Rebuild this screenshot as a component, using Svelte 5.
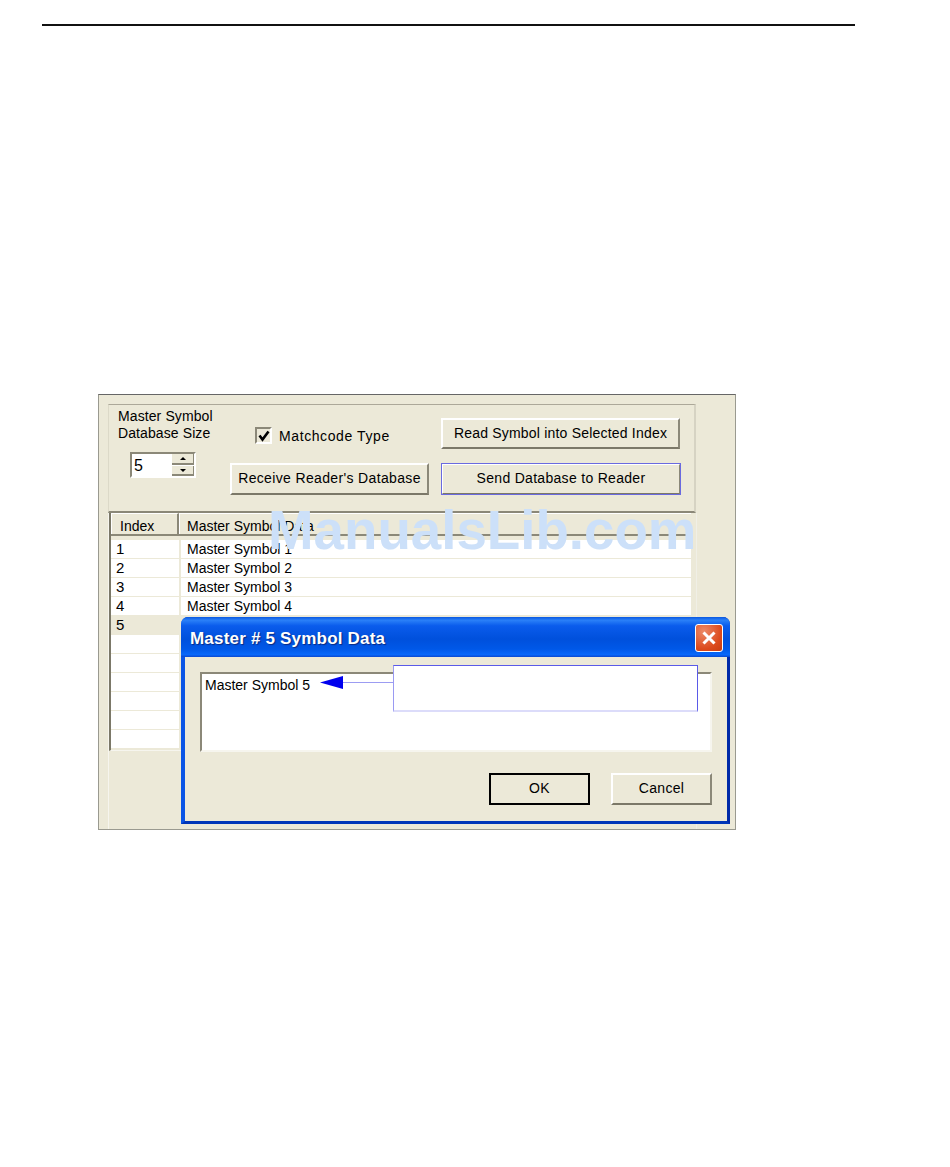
<script>
	const rows = [
		{ index: 1, data: 'Master Symbol 1' },
		{ index: 2, data: 'Master Symbol 2' },
		{ index: 3, data: 'Master Symbol 3' },
		{ index: 4, data: 'Master Symbol 4' },
		{ index: 5, data: '', selected: true },
		{ index: '', data: '' },
		{ index: '', data: '' },
		{ index: '', data: '' },
		{ index: '', data: '' },
		{ index: '', data: '' },
		{ index: '', data: '' }
	];
</script>

<div class="page">
	<div class="rule"></div>

	<div class="window">
		<div class="panel">
			<div class="size-col">
				<div class="size-label">Master Symbol<br />Database Size</div>
				<div class="spinner">
					<span class="spin-value">5</span>
					<div class="spin-btns">
						<span class="spin-btn up"></span>
						<span class="spin-btn down"></span>
					</div>
				</div>
			</div>
			<div class="mid-col">
				<div class="check-row">
					<span class="checkbox">
						<svg width="12" height="12" viewBox="0 0 12 12">
							<path d="M1.5 5.5 L4.5 9.5 L10.5 1.5" fill="none" stroke="#000" stroke-width="2.6" />
						</svg>
					</span>
					<span class="check-label">Matchcode Type</span>
				</div>
				<button class="btn receive">Receive Reader's Database</button>
			</div>
			<div class="right-col">
				<button class="btn read">Read Symbol into Selected Index</button>
				<button class="btn send">Send Database to Reader</button>
			</div>
		</div>

		<div class="lower">
			<div class="grid">
				<div class="grid-head">
					<div class="head-cell index">Index</div>
					<div class="head-cell data">Master Symbol Data</div>
				</div>
				{#each rows as row}
					<div class="grid-row" class:selected={row.selected}>
						<div class="cell index">{row.index}</div>
						<div class="cell data">{row.data}</div>
					</div>
				{/each}
			</div>
		</div>

		<div class="dialog">
			<div class="titlebar">
				<span class="title">Master # 5 Symbol Data</span>
				<span class="close">
					<svg width="16" height="16" viewBox="0 0 16 16">
						<path d="M2.5 2.5 L13.5 13.5 M13.5 2.5 L2.5 13.5" stroke="#fff" stroke-width="3" fill="none" />
					</svg>
				</span>
			</div>
			<div class="dialog-body">
				<div class="textbox">Master Symbol 5</div>
				<div class="dialog-actions">
					<button class="btn ok">OK</button>
					<button class="btn cancel">Cancel</button>
				</div>
			</div>
			<div class="callout"></div>
			<svg class="arrow" width="74" height="14" viewBox="0 0 74 14">
				<path d="M23 6.5 H73" stroke="#9c9cf2" stroke-width="1" fill="none" />
				<path d="M0 6.5 L23 0 V13 Z" fill="#0000ee" />
			</svg>
		</div>

		<div class="watermark">ManualsLib.com</div>
	</div>
</div>

<style>
	:global(body) {
		margin: 0;
		background: #fff;
	}

	.page {
		height: 1167px;
		padding-top: 24px;
		box-sizing: border-box;
		font-family: 'Liberation Sans', Arial, sans-serif;
		font-size: 14px;
		color: #000;
	}

	.rule {
		height: 2px;
		width: 813px;
		margin-left: 42px;
		background: #111;
	}

	.window {
		position: relative;
		box-sizing: border-box;
		width: 638px;
		height: 436px;
		margin: 368px 0 0 98px;
		padding: 9px 39px 0 9px;
		display: flex;
		flex-direction: column;
		background: #ece9d8;
		border: 1px solid #9a9a90;
		border-top-color: #666;
	}

	.panel {
		box-sizing: border-box;
		height: 109px;
		display: flex;
		padding: 4px 0 0 9px;
		border: 1px solid #f6f5ee;
		border-top-color: #aca899;
		border-left-color: #dcd9c8;
		border-bottom: 2px solid #8b8878;
		border-right: 2px solid #d6d3c3;
	}

	.size-col {
		width: 112px;
	}

	.size-label {
		margin-top: -1px;
		line-height: 17px;
		letter-spacing: 0.1px;
	}

	.spinner {
		box-sizing: border-box;
		display: flex;
		justify-content: space-between;
		width: 66px;
		height: 26px;
		margin: 10px 0 0 12px;
		padding-left: 2px;
		background: #fff;
		border: 2px solid #fff;
		border-top-color: #8b8878;
		border-left-color: #8b8878;
		font-size: 16px;
		line-height: 24px;
	}

	.spin-btns {
		width: 22px;
		display: flex;
		flex-direction: column;
		gap: 1px;
	}

	.spin-btn {
		flex: 1;
		position: relative;
		background: #ece9d8;
		border-bottom: 2px solid #8b8878;
		border-right: 1px solid #8b8878;
	}

	.spin-btn::after {
		content: '';
		position: absolute;
		left: 8px;
		border-left: 3px solid transparent;
		border-right: 3px solid transparent;
	}

	.spin-btn.up::after {
		top: 3px;
		border-bottom: 3px solid #000;
	}

	.spin-btn.down::after {
		top: 3px;
		border-top: 3px solid #000;
	}

	.mid-col {
		width: 199px;
		padding-top: 18px;
		display: flex;
		flex-direction: column;
	}

	.check-row {
		display: flex;
		align-items: center;
		gap: 7px;
		height: 17px;
		margin-left: 25px;
	}

	.checkbox {
		box-sizing: border-box;
		width: 17px;
		height: 17px;
		display: flex;
		align-items: center;
		justify-content: center;
		background: #ece9d8;
		border: 2px solid #fff;
		border-top-color: #8b8878;
		border-left-color: #8b8878;
	}

	.check-label {
		letter-spacing: 0.6px;
	}

	.btn {
		box-sizing: border-box;
		padding: 0 0 2px;
		font: inherit;
		color: #000;
		background: #ece9d8;
		border: 2px solid #fff;
		border-right-color: #8b8878;
		border-bottom-color: #7b7868;
		border-radius: 0;
		letter-spacing: 0.3px;
	}

	.receive {
		height: 32px;
		margin-top: 19px;
		width: 199px;
		letter-spacing: 0.35px;
	}

	.right-col {
		width: 240px;
		margin-left: 12px;
		padding-top: 9px;
		display: flex;
		flex-direction: column;
	}

	.read {
		height: 31px;
		width: 239px;
		letter-spacing: 0.2px;
	}

	.send {
		height: 32px;
		margin-top: 14px;
		width: 240px;
		outline: 1px solid #6a6ae0;
		outline-offset: -1px;
	}

	.lower {
		flex: 1;
		border-left: 1px solid #f6f5ee;
		border-right: 1px solid #f0efe6;
		margin-right: -1px;
		padding-right: 5px;
	}

	.grid {
		border-left: 2px solid #7b7868;
		border-bottom: 1px solid #f6f5ee;
		padding-bottom: 1px;
	}

	.grid-head {
		display: flex;
		height: 21px;
		border-bottom: 2px solid #8b8878;
		margin-bottom: 4px;
		background: #ece9d8;
	}

	.head-cell {
		box-sizing: border-box;
		line-height: 24px;
		border-left: 1px solid #fff;
		border-top: 1px solid #fff;
	}

	.head-cell.index {
		width: 68px;
		padding-left: 8px;
		border-right: 2px solid #8b8878;
	}

	.head-cell.data {
		flex: 1;
		padding-left: 7px;
	}

	.grid-row {
		display: flex;
		gap: 2px;
		height: 19px;
		box-sizing: border-box;
		border-bottom: 1px solid #ece9d8;
	}

	.cell {
		box-sizing: border-box;
		background: #fff;
		line-height: 18px;
	}

	.cell.index {
		width: 68px;
		padding-left: 5px;
		font-size: 15px;
	}

	.cell.data {
		flex: 1;
		padding-left: 6px;
	}

	.selected .cell {
		background: #ece9d8;
	}

	.dialog {
		position: absolute;
		left: 82px;
		top: 222px;
		box-sizing: border-box;
		width: 549px;
		height: 207px;
		display: flex;
		flex-direction: column;
		background: #0a3fc8;
		border-radius: 7px 7px 0 0;
		border-left: 4px solid #0a55e6;
		border-right: 3px solid #0029a8;
		border-bottom: 3px solid #0036b8;
	}

	.titlebar {
		height: 40px;
		margin: 0 -3px 0 -4px;
		padding: 0 7px 0 9px;
		display: flex;
		align-items: center;
		justify-content: space-between;
		flex: none;
		border-radius: 7px 7px 0 0;
		background: linear-gradient(#0a58e0 0, #2a80f8 8%, #0a5cec 22%, #0050dc 55%, #0058e8 80%, #0868fa 94%, #0a48d0 100%);
	}

	.title {
		margin-top: 3px;
		color: #fff;
		font-size: 17px;
		font-weight: bold;
		letter-spacing: 0.2px;
		text-shadow: 1px 1px 1px #0a2a80;
	}

	.close {
		box-sizing: border-box;
		width: 28px;
		height: 28px;
		margin-top: 1px;
		display: flex;
		align-items: center;
		justify-content: center;
		border: 1px solid #fff;
		border-radius: 3px;
		background: radial-gradient(circle at 30% 25%, #ec8a68, #dc4a1c 65%, #c83c10);
	}

	.dialog-body {
		flex: 1;
		padding: 15px 15px 0 15px;
		background: #ece9d8;
	}

	.textbox {
		box-sizing: border-box;
		height: 80px;
		padding: 2px 0 0 3px;
		line-height: 19px;
		background: #fff;
		border: 2px solid #f6f5ee;
		border-top-color: #8b8878;
		border-left-color: #8b8878;
	}

	.dialog-actions {
		display: flex;
		justify-content: flex-end;
		gap: 21px;
		margin-top: 21px;
	}

	.ok,
	.cancel {
		width: 101px;
		height: 32px;
	}

	.ok {
		outline: 2px solid #000;
		outline-offset: -2px;
	}

	.callout {
		position: absolute;
		left: 208px;
		top: 48px;
		box-sizing: border-box;
		width: 305px;
		height: 47px;
		background: #fff;
		border: 1px solid #5a5ae8;
		border-left-color: #9a9af2;
		border-bottom: 2px solid #dcdcfa;
	}

	.arrow {
		position: absolute;
		left: 135px;
		top: 59px;
	}

	.watermark {
		position: absolute;
		left: 169px;
		top: 103px;
		font-size: 54.7px;
		line-height: 64px;
		font-weight: bold;
		color: #cce0f9;
		white-space: nowrap;
		pointer-events: none;
	}
</style>
